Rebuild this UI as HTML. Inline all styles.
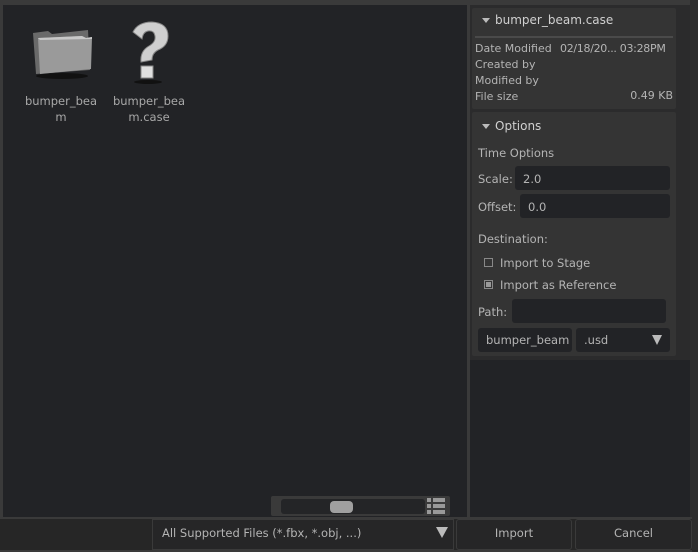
<!DOCTYPE html><html><head><style>
*{margin:0;padding:0;box-sizing:border-box}
body{width:698px;height:552px;background:#222326;font-family:"Liberation Sans","DejaVu Sans",sans-serif;font-size:12px;color:#b4b4b4;position:relative;overflow:hidden}
.a{position:absolute;white-space:nowrap}
.t{font-family:"DejaVu Sans",sans-serif;font-size:11.5px}
.inp{background:#222326;border-radius:3px}
</style></head><body>
<div class="a" style="left:0;top:0;width:698px;height:5px;background:#3a3a3a"></div>
<div class="a" style="left:0;top:5px;width:3px;height:513px;background:#3a3a3a"></div>
<div class="a" style="left:467px;top:5px;width:3px;height:513px;background:#3a3a3a"></div>
<div class="a" style="left:470px;top:5px;width:220px;height:355px;background:#2b2b2c"></div>
<div class="a" style="left:690px;top:0;width:8px;height:552px;background:#2c2c2c"></div>
<svg class="a" style="left:30px;top:26px" width="64" height="56" viewBox="0 0 64 56">
<ellipse cx="32" cy="50" rx="26" ry="3" fill="#111"/>
<path d="M3 7 L18 5 L22 8 L58 4 L60 44 L6 48 Z" fill="#6a6a6a"/>
<path d="M8 12 L52 10 L56 12 L62 11 L61 43 L10 48 Z" fill="#9a9a9a"/>
<path d="M8 12 L52 10 L56 12 L62 11 L62 13 L10 14 Z" fill="#c8c8c8"/>
</svg>
<svg class="a" style="left:128px;top:20px" width="48" height="64" viewBox="0 0 48 64">
<ellipse cx="20" cy="62" rx="14" ry="2" fill="#111"/>
<path d="M5 12 Q10 2 24 2 Q40 3 40 16 Q40 26 30 30 Q24 33 24 40 L13 42 Q12 31 21 26 Q28 22 27 16 Q26 10 20 11 Q15 12 14 19 Z" fill="#cfcfcf" stroke="#888" stroke-width="1"/>
<rect x="13" y="46" width="12" height="12" fill="#e0e0e0" stroke="#888"/>
</svg>
<div class="a t" style="left:18px;top:93px;width:86px;text-align:center;line-height:16px;color:#a8a8a8">bumper_bea<br>m</div>
<div class="a t" style="left:108px;top:93px;width:82px;text-align:center;line-height:16px;color:#a8a8a8">bumper_bea<br>m.case</div>
<div class="a" style="left:472px;top:8px;width:204px;height:101px;background:#343434;border-radius:2px"></div>
<div class="a" style="left:482px;top:18px;width:0;height:0;border-left:4px solid transparent;border-right:4px solid transparent;border-top:5px solid #bbb"></div>
<div class="a t" style="left:495px;top:13px;color:#d0d0d0;font-size:12px">bumper_beam.case</div>
<div class="a" style="left:475px;top:36px;width:198px;height:2px;background:#4a4a4a"></div>
<div class="a t" style="left:475px;top:41px;line-height:16px;font-size:11px">Date Modified<br>Created by<br>Modified by<br>File size</div>
<div class="a t" style="left:560px;top:41px;line-height:16px;font-size:11px;letter-spacing:-0.3px">02/18/20... 03:28PM</div>
<div class="a t" style="left:600px;top:89px;width:73px;text-align:right;font-size:11px">0.49 KB</div>
<div class="a" style="left:472px;top:112px;width:204px;height:244px;background:#343434;border-radius:2px"></div>
<div class="a" style="left:482px;top:124px;width:0;height:0;border-left:4px solid transparent;border-right:4px solid transparent;border-top:5px solid #bbb"></div>
<div class="a t" style="left:495px;top:119px;color:#d0d0d0;font-size:12px">Options</div>
<div class="a t" style="left:478px;top:146px">Time Options</div>
<div class="a t" style="left:478px;top:172px">Scale:</div>
<div class="a inp" style="left:515px;top:166px;width:155px;height:24px"></div>
<div class="a t" style="left:523px;top:172px">2.0</div>
<div class="a t" style="left:478px;top:200px">Offset:</div>
<div class="a inp" style="left:520px;top:194px;width:150px;height:24px"></div>
<div class="a t" style="left:528px;top:200px">0.0</div>
<div class="a t" style="left:478px;top:232px">Destination:</div>
<div class="a" style="left:484px;top:258px;width:9px;height:9px;border:1px solid #888"></div>
<div class="a t" style="left:500px;top:256px">Import to Stage</div>
<div class="a" style="left:484px;top:280px;width:9px;height:9px;border:1px solid #888;padding:1px"><div style="width:5px;height:5px;background:#999"></div></div>
<div class="a t" style="left:500px;top:278px">Import as Reference</div>
<div class="a t" style="left:478px;top:305px">Path:</div>
<div class="a inp" style="left:512px;top:299px;width:154px;height:24px"></div>
<div class="a inp" style="left:478px;top:328px;width:94px;height:24px"></div>
<div class="a t" style="left:486px;top:333px">bumper_beam</div>
<div class="a inp" style="left:576px;top:328px;width:94px;height:24px"></div>
<div class="a t" style="left:584px;top:333px">.usd</div>
<div class="a" style="left:652px;top:335px;border-left:5px solid transparent;border-right:5px solid transparent;border-top:10px solid #bbb"></div>
<div class="a" style="left:271px;top:496px;width:179px;height:20px;background:#3a3a3a;border-radius:2px"></div>
<div class="a" style="left:281px;top:499px;width:144px;height:15px;background:#242527;border-radius:3px"></div>
<div class="a" style="left:330px;top:501px;width:23px;height:12px;background:#a0a0a0;border-radius:4px"></div>
<svg class="a" style="left:427px;top:498px" width="18" height="16"><g fill="#999"><rect x="0" y="0" width="4" height="4"/><rect x="6" y="0" width="12" height="4"/><rect x="0" y="6" width="4" height="4"/><rect x="6" y="6" width="12" height="4"/><rect x="0" y="12" width="4" height="4"/><rect x="6" y="12" width="12" height="4"/></g></svg>
<div class="a" style="left:0;top:517px;width:692px;height:2px;background:#3a3a3a"></div>
<div class="a" style="left:0;top:519px;width:692px;height:33px;background:#262626"></div>
<div class="a" style="left:152px;top:519px;width:302px;height:31px;border:1px solid #3a3a3a;background:#262627"></div>
<div class="a t" style="left:162px;top:526px">All Supported Files (*.fbx, *.obj, ...)</div>
<div class="a" style="left:436px;top:527px;border-left:6px solid transparent;border-right:6px solid transparent;border-top:11px solid #bbb"></div>
<div class="a" style="left:456px;top:519px;width:116px;height:31px;border:1px solid #3a3a3a;border-radius:3px;background:#262627"></div>
<div class="a t" style="left:456px;top:526px;width:116px;text-align:center">Import</div>
<div class="a" style="left:575px;top:519px;width:117px;height:31px;border:1px solid #3a3a3a;border-radius:3px;background:#262627"></div>
<div class="a t" style="left:575px;top:526px;width:117px;text-align:center">Cancel</div>
<div class="a" style="left:0;top:550px;width:692px;height:2px;background:#3a3a3a"></div>
</body></html>
